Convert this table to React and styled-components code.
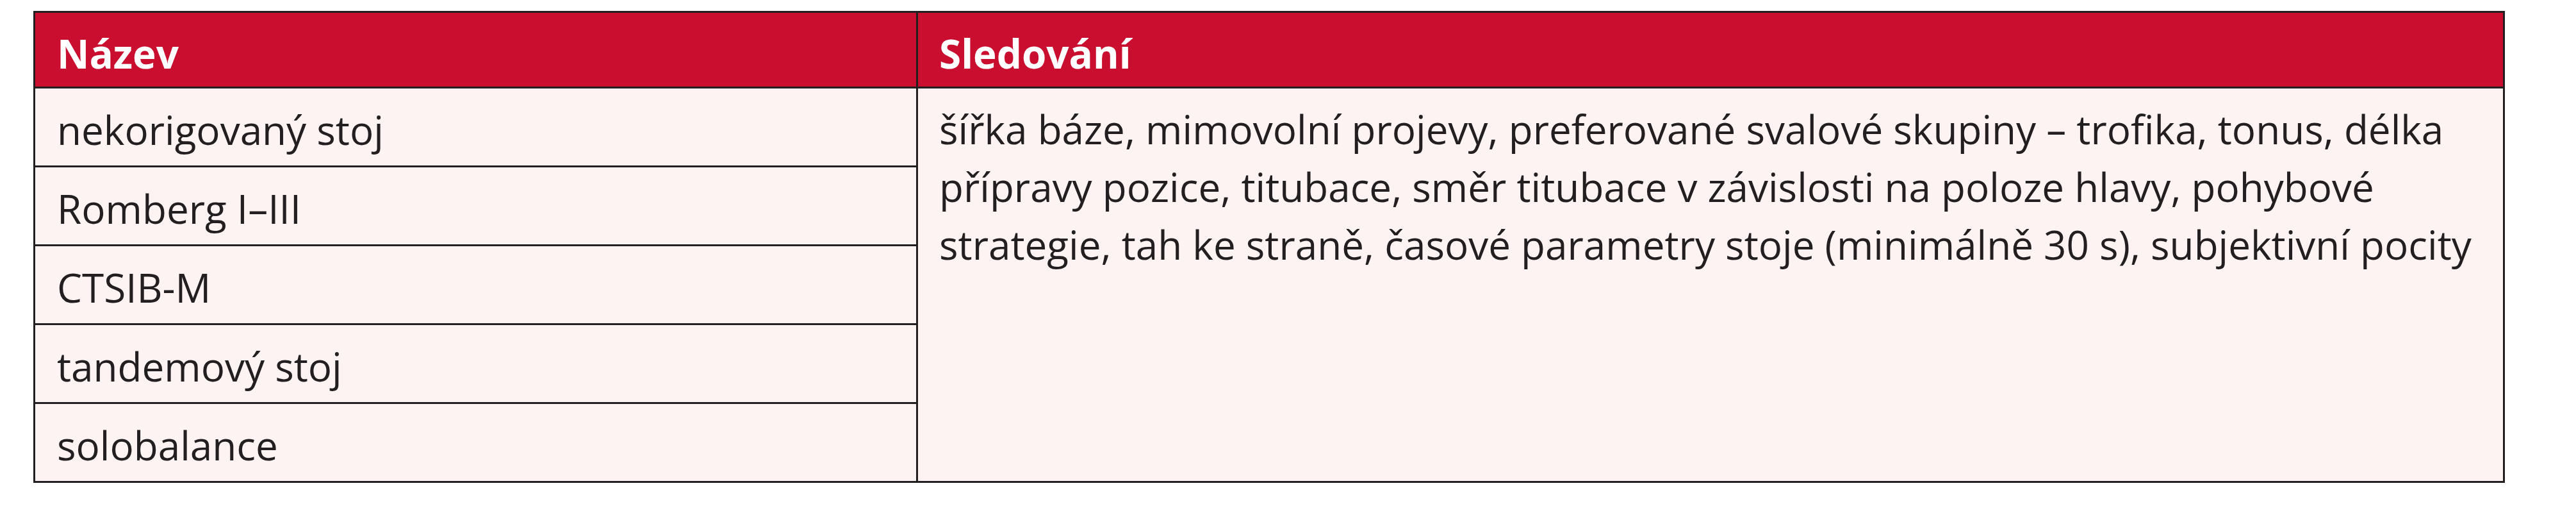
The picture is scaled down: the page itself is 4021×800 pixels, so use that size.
import styled, { createGlobalStyle } from 'styled-components';

const GlobalStyle = createGlobalStyle`
    html, body {
        margin: 0;
        padding: 0;
        background: #ffffff;
    }
    body {
        font-family: "Open Sans", "Noto Sans", "DejaVu Sans", sans-serif;
        color: #231f20;
    }
`;

const Page = styled.div`
    padding: 17px 0 0 52px;
    width: 4021px;
    height: 800px;
    box-sizing: border-box;
`;

const Table = styled.div`
    display: grid;
    grid-template-columns: 1378px 1fr;
    width: 3858px;
    box-sizing: border-box;
    border: 3px solid #231f20;
    background: #fcf3f2;
`;

const HeadCell = styled.div`
    background: #c90e2f;
    color: #ffffff;
    font-weight: 700;
    font-size: 62px;
    line-height: 90px;
    padding: ${(p) => (p.$first ? '18px 34px 7px' : '18px 33px 7px')};
    border-bottom: 3px solid #231f20;
    border-right: ${(p) => (p.$first ? '3px solid #231f20' : 'none')};
`;

const NameColumn = styled.div`
    display: flex;
    flex-direction: column;
    border-right: 3px solid #231f20;
`;

const NameCell = styled.div`
    font-size: 62px;
    line-height: 90px;
    padding: 19px 34px 11px;
    white-space: nowrap;
    border-bottom: ${(p) => (p.$last ? 'none' : '3px solid #231f20')};
`;

const DetailCell = styled.div`
    font-size: 62px;
    line-height: 90px;
    padding: 18px 33px;
`;

const Line = styled.span`
    display: block;
    white-space: nowrap;
`;

const names = ['nekorigovaný stoj', 'Romberg I–III', 'CTSIB-M', 'tandemový stoj', 'solobalance'];

const details = [
    'šířka báze, mimovolní projevy, preferované svalové skupiny – trofika, tonus, délka',
    'přípravy pozice, titubace, směr titubace v závislosti na poloze hlavy, pohybové',
    'strategie, tah ke straně, časové parametry stoje (minimálně 30 s), subjektivní pocity',
];

export default function App() {
    return (
        <>
            <GlobalStyle />
            <Page>
                <Table>
                    <HeadCell $first>Název</HeadCell>
                    <HeadCell>Sledování</HeadCell>
                    <NameColumn>
                        {names.map((name, i) => (
                            <NameCell key={name} $last={i === names.length - 1}>
                                {name}
                            </NameCell>
                        ))}
                    </NameColumn>
                    <DetailCell>
                        {details.map((line) => (
                            <Line key={line}>{line}</Line>
                        ))}
                    </DetailCell>
                </Table>
            </Page>
        </>
    );
}
